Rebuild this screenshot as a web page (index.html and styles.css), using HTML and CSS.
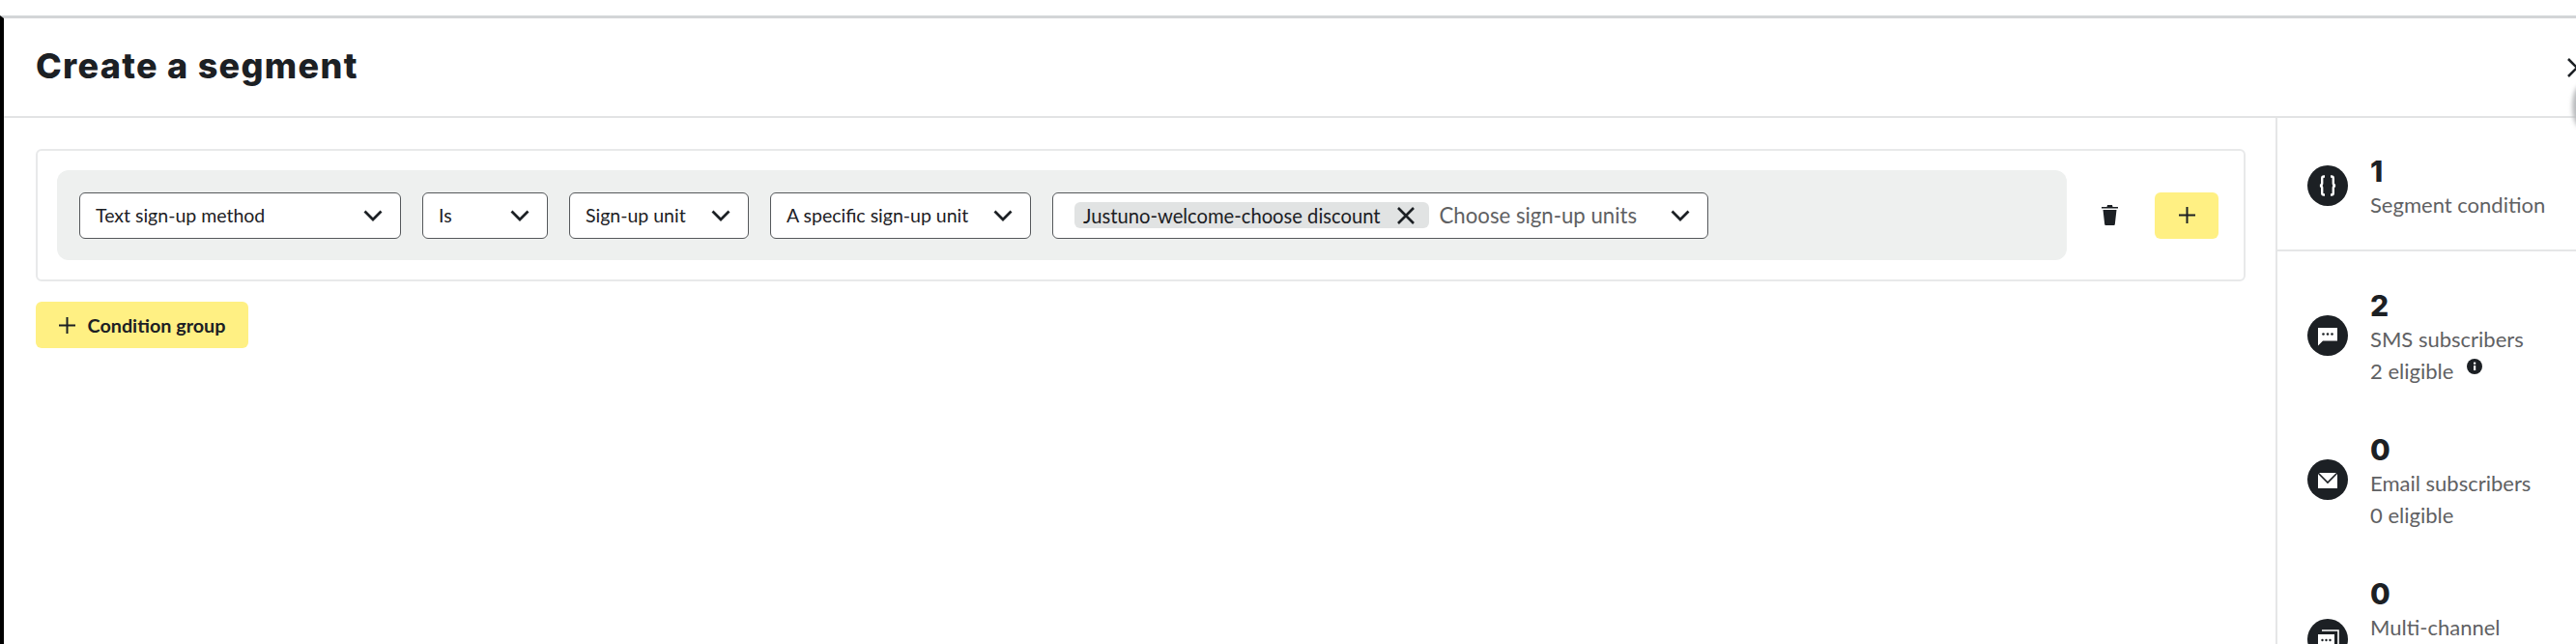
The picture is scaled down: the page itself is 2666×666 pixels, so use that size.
FILE: index.html
```html
<!DOCTYPE html>
<html lang="en">
<head>
    <meta charset="UTF-8">
    <title>Create a segment</title>
    <link rel="stylesheet" href="styles.css">
</head>
<body>
    <div class="modal">
        <!-- Header -->
        <header class="modal-header">
            <h1>Create a segment</h1>
            <svg class="close-icon" viewBox="0 0 20 20"><path d="M1 1 L10 10 L1 19" /></svg>
            <span class="close-shadow"></span>
        </header>

        <div class="modal-body">
            <!-- Conditions -->
            <main class="builder">
                <section class="condition-card">
                    <div class="condition-row">
                        <div class="select select-method">
                            <span>Text sign-up method</span>
                            <svg class="chevron" viewBox="0 0 20 12"><path d="M1.5 1.5 L10 10 L18.5 1.5" /></svg>
                        </div>
                        <div class="select select-is">
                            <span>Is</span>
                            <svg class="chevron" viewBox="0 0 20 12"><path d="M1.5 1.5 L10 10 L18.5 1.5" /></svg>
                        </div>
                        <div class="select select-unit">
                            <span>Sign-up unit</span>
                            <svg class="chevron" viewBox="0 0 20 12"><path d="M1.5 1.5 L10 10 L18.5 1.5" /></svg>
                        </div>
                        <div class="select select-specific">
                            <span>A specific sign-up unit</span>
                            <svg class="chevron" viewBox="0 0 20 12"><path d="M1.5 1.5 L10 10 L18.5 1.5" /></svg>
                        </div>
                        <div class="select select-multi">
                            <span class="tag">
                                Justuno-welcome-choose discount
                                <svg class="tag-x" viewBox="0 0 20 20"><path d="M2 2 L18 18 M18 2 L2 18" /></svg>
                            </span>
                            <span class="placeholder">Choose sign-up units</span>
                            <svg class="chevron" viewBox="0 0 20 12"><path d="M1.5 1.5 L10 10 L18.5 1.5" /></svg>
                        </div>
                    </div>
                    <div class="condition-actions">
                        <svg class="trash" viewBox="0 0 17 21">
                            <path d="M6 0 H11 L11.5 2 H17 V3.5 H0 V2 H5.5 Z" />
                            <path d="M1.5 5 H15.5 L13.8 20 Q13.7 21 12.8 21 H4.2 Q3.3 21 3.2 20 Z" />
                        </svg>
                        <button class="btn btn-add">
                            <svg class="plus" viewBox="0 0 17 17"><path d="M8.5 0 V17 M0 8.5 H17" /></svg>
                        </button>
                    </div>
                </section>
                <button class="btn btn-group">
                    <svg class="plus" viewBox="0 0 17 17"><path d="M8.5 0 V17 M0 8.5 H17" /></svg>
                    Condition group
                </button>
            </main>

            <!-- Summary -->
            <aside class="summary">
                <div class="stat stat-top">
                    <span class="stat-icon">
                        <svg viewBox="0 0 42 42"><path class="line" d="M18 11.5 H17 Q15.2 11.5 15.2 13.5 V18.5 Q15.2 20.5 13.2 21 Q15.2 21.5 15.2 23.5 V28.5 Q15.2 30.5 17 30.5 H18 M24 11.5 H25 Q26.8 11.5 26.8 13.5 V18.5 Q26.8 20.5 28.8 21 Q26.8 21.5 26.8 23.5 V28.5 Q26.8 30.5 25 30.5 H24" /></svg>
                    </span>
                    <div class="stat-text">
                        <div class="stat-num">1</div>
                        <div class="stat-label">Segment condition</div>
                    </div>
                </div>
                <div class="stat-list">
                    <div class="stat">
                        <span class="stat-icon">
                            <svg viewBox="0 0 42 42"><path class="fill" d="M11 13 H31 V26.5 H16 L11 31.5 Z" /><circle class="dot" cx="16.5" cy="19.5" r="1.3" /><circle class="dot" cx="21" cy="19.5" r="1.3" /><circle class="dot" cx="25.5" cy="19.5" r="1.3" /></svg>
                        </span>
                        <div class="stat-text">
                            <div class="stat-num">2</div>
                            <div class="stat-label">SMS subscribers</div>
                            <div class="stat-label">2 eligible
                                <svg class="info" viewBox="0 0 16 16"><circle cx="8" cy="8" r="8" /><rect class="info-mark" x="7" y="7" width="2.2" height="5" /><rect class="info-mark" x="7" y="3.6" width="2.2" height="2.2" /></svg>
                            </div>
                        </div>
                    </div>
                    <div class="stat">
                        <span class="stat-icon">
                            <svg viewBox="0 0 42 42"><path class="fill" d="M11 14 H31 V30 H11 Z" /><path class="env" d="M11 14 L21 24 L31 14" /></svg>
                        </span>
                        <div class="stat-text">
                            <div class="stat-num">0</div>
                            <div class="stat-label">Email subscribers</div>
                            <div class="stat-label">0 eligible</div>
                        </div>
                    </div>
                    <div class="stat stat-cut">
                        <span class="stat-icon">
                            <svg viewBox="0 0 42 42"><path class="line thin" d="M15 12 H32 V28" /><path class="fill" d="M11 16 H28 V32 H11 Z" /><circle class="dot" cx="15.5" cy="22" r="1.2" /><circle class="dot" cx="19.5" cy="22" r="1.2" /><circle class="dot" cx="23.5" cy="22" r="1.2" /></svg>
                        </span>
                        <div class="stat-text">
                            <div class="stat-num">0</div>
                            <div class="stat-label">Multi-channel</div>
                        </div>
                    </div>
                </div>
            </aside>
        </div>
    </div>
</body>
</html>
```

FILE: styles.css
```css
/* Global Styles */
* {
    margin: 0;
    padding: 0;
    box-sizing: border-box;
    font-family: 'Lato', 'Noto Sans', sans-serif;
}

body {
    background: #fff;
    color: #1c2024;
    height: 666px;
    overflow: hidden;
}

/* Modal */
.modal {
    margin-top: 16px;
    height: 650px;
    border-left: 4px solid #000;
    border-top: 3px solid #d3d5d7;
    overflow: hidden;
}

.modal-header {
    position: relative;
    height: 103px;
    padding: 0 0 3px 33px;
    display: flex;
    align-items: center;
    border-bottom: 2px solid #e2e3e4;
}

.modal-header h1 {
    font-family: 'Inter', sans-serif;
    font-size: 36px;
    font-weight: 800;
    letter-spacing: 1.3px;
}

.close-icon {
    position: absolute;
    left: 2653px;
    top: 41px;
    width: 20px;
    height: 20px;
    fill: none;
    stroke: #1c2024;
    stroke-width: 2.6;
}

.close-shadow {
    position: absolute;
    right: -14px;
    top: 69px;
    width: 18px;
    height: 44px;
    border-radius: 50%;
    background: #b9bbbd;
    filter: blur(2px);
}

.modal-body {
    display: flex;
    height: 545px;
}

/* Conditions */
.builder {
    width: 2351px;
    padding: 32px 31px 0 33px;
}

.condition-card {
    display: flex;
    align-items: center;
    height: 137px;
    padding: 0 26px 0 20px;
    border: 2px solid #e8e9ea;
    border-radius: 6px;
}

.condition-row {
    display: flex;
    align-items: center;
    gap: 22px;
    width: 2083px;
    height: 93px;
    padding-left: 23px;
    background: #eef0ef;
    border-radius: 12px;
}

.select {
    display: flex;
    align-items: center;
    justify-content: space-between;
    height: 48px;
    padding: 0 18.5px 0 16px;
    background: #fff;
    border: 1.5px solid #55585b;
    border-radius: 6px;
    font-size: 19.5px;
    white-space: nowrap;
}

.select-method { width: 333px; }
.select-is { width: 130px; }
.select-unit { width: 186px; }
.select-specific { width: 270px; }
.select-multi { width: 679px; }

.chevron {
    flex: none;
    width: 20px;
    height: 12px;
    fill: none;
    stroke: #1c2024;
    stroke-width: 2.8;
}

.tag {
    display: flex;
    align-items: center;
    gap: 16px;
    height: 27px;
    margin-left: 6px;
    padding: 0 14px 0 9px;
    background: #e1e3e3;
    border-radius: 6px;
    font-size: 20.2px;
}

.tag-x {
    width: 20px;
    height: 20px;
    fill: none;
    stroke: #1c2024;
    stroke-width: 2.6;
}

.placeholder {
    margin: 0 auto 0 11px;
    font-size: 22.2px;
    color: #5f6163;
}

.condition-actions {
    display: flex;
    align-items: center;
    margin-left: 36px;
    gap: 38px;
}

.trash {
    width: 17px;
    height: 21px;
    fill: #1c2024;
}

.btn {
    display: flex;
    align-items: center;
    justify-content: center;
    height: 48px;
    background: #fff083;
    border: none;
    border-radius: 6px;
    color: #1c2024;
}

.plus {
    width: 17px;
    height: 17px;
    fill: none;
    stroke: #1c2024;
    stroke-width: 2;
}

.btn-add {
    width: 66px;
}

.btn-group {
    width: 220px;
    margin-top: 21px;
    gap: 13px;
    font-size: 19.8px;
    font-weight: 700;
}

/* Summary */
.summary {
    flex: 1;
    border-left: 2px solid #e5e6e7;
}

.stat {
    display: flex;
    align-items: center;
    gap: 23px;
    padding-left: 31px;
}

.stat-top {
    padding-top: 37px;
    padding-bottom: 30px;
    border-bottom: 2px solid #e5e6e7;
}

.stat-list {
    display: flex;
    flex-direction: column;
    gap: 47px;
    padding-top: 38px;
}

.stat-icon {
    flex: none;
    width: 42px;
    height: 42px;
    margin-bottom: 4px;
    background: #1c2024;
    border-radius: 50%;
}

/* last row runs off the bottom of the panel, its icon sits lower */
.stat-cut {
    align-items: flex-start;
}

.stat-cut .stat-icon {
    margin: 44px 0 0;
}

.stat-icon svg {
    display: block;
    width: 42px;
    height: 42px;
}

.stat-icon .fill {
    fill: #fff;
}

.stat-icon .dot {
    fill: #1c2024;
}

.stat-icon .line {
    fill: none;
    stroke: #fff;
    stroke-width: 2.4;
}

.stat-icon .thin {
    stroke-width: 1.6;
}

.stat-icon .env {
    fill: none;
    stroke: #1c2024;
    stroke-width: 1.6;
}

.stat-num {
    font-family: 'Inter', sans-serif;
    font-size: 30px;
    font-weight: 800;
    line-height: 36px;
}

.stat-label {
    font-size: 22px;
    line-height: 33px;
    color: #5f6163;
    white-space: nowrap;
}

.info {
    width: 16px;
    height: 16px;
    margin-left: 8px;
    vertical-align: 5px;
    fill: #1c2024;
}

.info .info-mark {
    fill: #fff;
}
```
